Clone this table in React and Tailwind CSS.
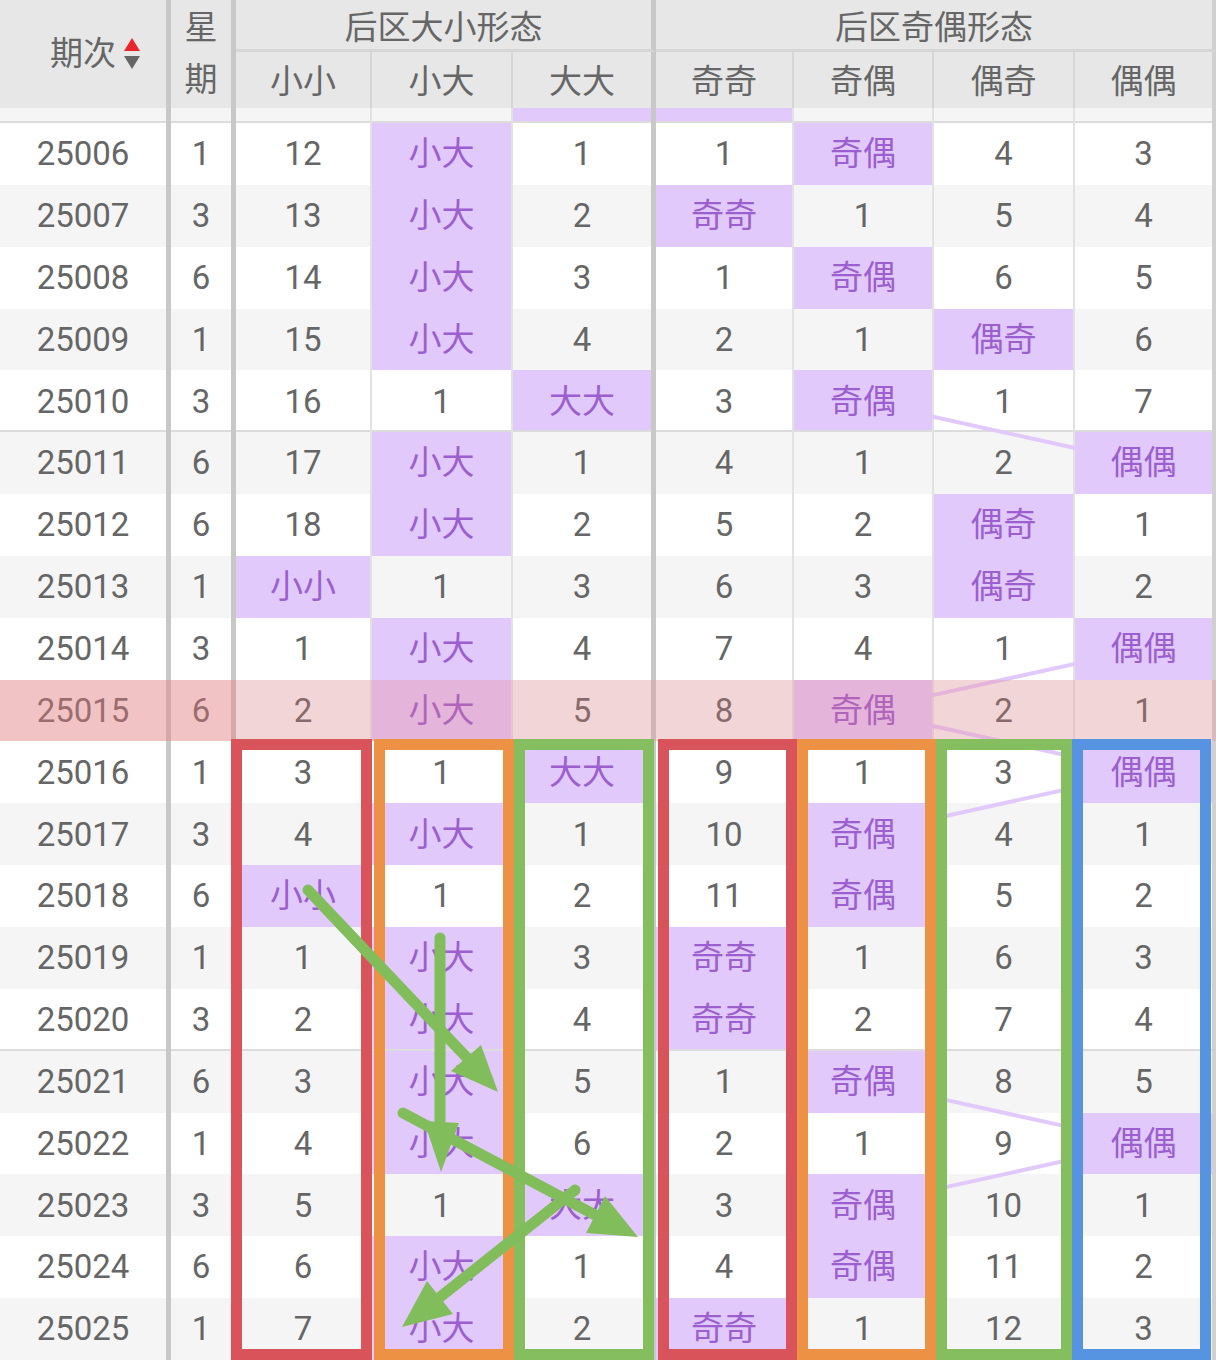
import React from 'react';

const COLS = 'grid grid-cols-[171px_65px_136px_141px_143px_138px_140px_141px_141px]';

// right border of each of the 9 columns
const EDGE = [
  'border-r-[5px] border-[#c8c8c8]',
  'border-r-[5px] border-[#c8c8c8]',
  'border-r-2 border-[#e2e2e2]',
  'border-r-2 border-[#e2e2e2]',
  'border-r-[5px] border-[#c8c8c8]',
  'border-r-2 border-[#e2e2e2]',
  'border-r-2 border-[#e2e2e2]',
  'border-r-2 border-[#e2e2e2]',
  'border-r-4 border-[#d0d0d0]',
];

const rows = [
  ['25006', 1, 12, '小大', 1, 1, '奇偶', 4, 3],
  ['25007', 3, 13, '小大', 2, '奇奇', 1, 5, 4],
  ['25008', 6, 14, '小大', 3, 1, '奇偶', 6, 5],
  ['25009', 1, 15, '小大', 4, 2, 1, '偶奇', 6],
  ['25010', 3, 16, 1, '大大', 3, '奇偶', 1, 7],
  ['25011', 6, 17, '小大', 1, 4, 1, 2, '偶偶'],
  ['25012', 6, 18, '小大', 2, 5, 2, '偶奇', 1],
  ['25013', 1, '小小', 1, 3, 6, 3, '偶奇', 2],
  ['25014', 3, 1, '小大', 4, 7, 4, 1, '偶偶'],
  ['25015', 6, 2, '小大', 5, 8, '奇偶', 2, 1],
  ['25016', 1, 3, 1, '大大', 9, 1, 3, '偶偶'],
  ['25017', 3, 4, '小大', 1, 10, '奇偶', 4, 1],
  ['25018', 6, '小小', 1, 2, 11, '奇偶', 5, 2],
  ['25019', 1, 1, '小大', 3, '奇奇', 1, 6, 3],
  ['25020', 3, 2, '小大', 4, '奇奇', 2, 7, 4],
  ['25021', 6, 3, '小大', 5, 1, '奇偶', 8, 5],
  ['25022', 1, 4, '小大', 6, 2, 1, 9, '偶偶'],
  ['25023', 3, 5, 1, '大大', 3, '奇偶', 10, 1],
  ['25024', 6, 6, '小大', 1, 4, '奇偶', 11, 2],
  ['25025', 1, 7, '小大', 2, '奇奇', 1, 12, 3],
];

const TOP = 123;
const ROW_H = 61.85;
const colX = [[236, 371], [372, 511], [513, 651], [656, 792], [794, 932], [934, 1073], [1075, 1212]];

function trendLines() {
  const out = [];
  const groups = [[2, 3, 4], [5, 6, 7, 8]];
  groups.forEach((g) => {
    for (let i = 0; i < rows.length - 1; i++) {
      const a = g.find((c) => typeof rows[i][c] === 'string') - 2;
      const b = g.find((c) => typeof rows[i + 1][c] === 'string') - 2;
      if (Math.abs(a - b) < 2) continue;
      const xa = (colX[a][0] + colX[a][1]) / 2;
      const xb = (colX[b][0] + colX[b][1]) / 2;
      const ya = TOP + (i + 0.5) * ROW_H;
      const yb = TOP + (i + 1.5) * ROW_H;
      const x1 = a < b ? colX[a][1] : colX[a][0];
      const x2 = a < b ? colX[b][0] : colX[b][1];
      const yAt = (x) => ya + ((x - xa) * (yb - ya)) / (xb - xa);
      out.push([x1, yAt(x1), x2, yAt(x2)]);
    }
  });
  return out;
}

function SortIcon() {
  return (
    <svg width="18" height="32" viewBox="0 0 18 32" className="absolute left-full top-1/2 -translate-y-1/2 ml-[7px]">
      <path d="M9 0 L17 13 H1 Z" fill="#e8262b" />
      <path d="M9 31 L17 18 H1 Z" fill="#666" />
    </svg>
  );
}

function Header() {
  return (
    <div className={`${COLS} grid-rows-[52px_56px] h-[108px] bg-[#e7e7e7] text-[#666]`}>
      <div className="row-span-2 border-r-[5px] border-[#c8c8c8] flex items-center justify-center">
        <span className="relative">
          期次
          <SortIcon />
        </span>
      </div>
      <div className="row-span-2 border-r-[5px] border-[#c8c8c8] flex flex-col items-center justify-center leading-[52px]">
        <span>星</span>
        <span>期</span>
      </div>
      <div className="col-span-3 border-r-[5px] border-r-[#c8c8c8] border-b-[3px] border-b-[#d6d6d6] flex items-center justify-center pt-[6px]">
        后区大小形态
      </div>
      <div className="col-span-4 border-r-4 border-r-[#d0d0d0] border-b-[3px] border-b-[#d6d6d6] flex items-center justify-center pt-[6px]">
        后区奇偶形态
      </div>
      {['小小', '小大', '大大', '奇奇', '奇偶', '偶奇', '偶偶'].map((t, i) => (
        <div
          key={t}
          className={`flex items-center justify-center pt-[4px] ${
            i === 2 ? 'border-r-[5px] border-[#c8c8c8]' : i === 6 ? 'border-r-4 border-[#d0d0d0]' : 'border-r-2 border-[#d6d6d6]'
          }`}
        >
          {t}
        </div>
      ))}
    </div>
  );
}

function Row({ data }) {
  const odd = Number(data[0]) % 2 === 1;
  const mark = data[0] === '25010' || data[0] === '25020';
  const hot = data[0] === '25015';
  return (
    <div className={`${COLS} relative`}>
      {data.map((v, i) => {
        const purple = typeof v === 'string' && i > 1;
        return (
          <div
            key={i}
            className={`flex items-center justify-center ${EDGE[i]} ${
              purple ? 'bg-[#e2c9fb] text-[#9b5fcf]' : odd ? 'bg-[#f5f5f5] text-[#666]' : 'bg-white text-[#666]'
            } ${mark ? 'shadow-[inset_0_-2px_0_#dcdcdc]' : ''}`}
          >
            {v}
          </div>
        );
      })}
      {hot && (
        <>
          <div className="absolute left-0 top-0 bottom-0 w-[236px] bg-[#eb787d]/40 z-20" />
          <div className="absolute left-[236px] top-0 bottom-0 right-0 bg-[#eb787d]/25 z-20" />
        </>
      )}
    </div>
  );
}

const boxes = [
  ['#d9535b', 231, 372],
  ['#ed9245', 374, 514],
  ['#84be5e', 514, 654],
  ['#d9535b', 658, 797],
  ['#ed9245', 797, 936],
  ['#84be5e', 936, 1072],
  ['#5694e2', 1072, 1211],
];

const arrows = [
  { line: [308, 890, 488, 1080], head: '498,1092 481,1045 451,1071' },
  { line: [440, 938, 440, 1130], head: '441,1172 424,1121 459,1123' },
  { line: [403, 1113, 612, 1224], head: '638,1237 586,1233 605,1196' },
  { line: [575, 1190, 425, 1309], head: '402,1327 453,1314 427,1281' },
];

export default function App() {
  const lines = trendLines();
  return (
    <div className="relative w-[1216px] h-[1360px] overflow-hidden bg-white font-['Roboto','Noto_Sans_CJK_SC',sans-serif] text-[33px]">
      <Header />
      {/* tail of row 25005 scrolled under the header */}
      <div className={`${COLS} h-[15px]`}>
        {EDGE.map((e, i) => (
          <div
            key={i}
            className={`${e} ${i === 4 || i === 5 ? 'bg-[#e2c9fb]' : 'bg-[#f5f5f5]'} shadow-[inset_0_-2px_0_#dcdcdc]`}
          />
        ))}
      </div>
      <div className="grid grid-rows-[repeat(20,1fr)] h-[1237px]">
        {rows.map((r) => (
          <Row key={r[0]} data={r} />
        ))}
      </div>

      <svg className="absolute inset-0 z-10 pointer-events-none" width="1216" height="1360">
        {lines.map(([x1, y1, x2, y2], i) => (
          <line key={i} x1={x1} y1={y1} x2={x2} y2={y2} stroke="#e2c9fb" strokeWidth="4" />
        ))}
      </svg>

      <svg className="absolute inset-0 z-30 pointer-events-none" width="1216" height="1360">
        {boxes.map(([c, x1, x2], i) => (
          <rect key={i} x={x1 + 5.5} y={744.5} width={x2 - x1 - 11} height={610} fill="none" stroke={c} strokeWidth="11" />
        ))}
        {arrows.map((a, i) => (
          <g key={i}>
            <line x1={a.line[0]} y1={a.line[1]} x2={a.line[2]} y2={a.line[3]} stroke="#82bd5c" strokeWidth="11" strokeLinecap="round" />
            <polygon points={a.head} fill="#82bd5c" />
          </g>
        ))}
      </svg>
    </div>
  );
}
